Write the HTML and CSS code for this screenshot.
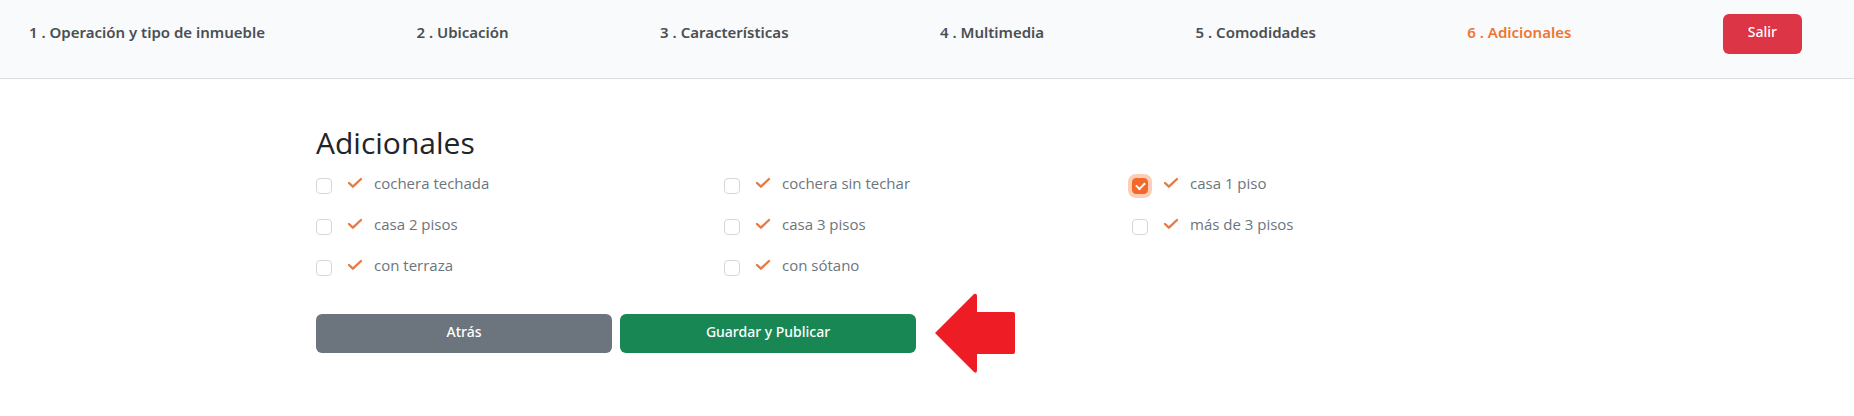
FILE: index.html
```html
<!DOCTYPE html>
<html lang="es">
<head>
<meta charset="utf-8">
<meta name="viewport" content="width=device-width, initial-scale=1">
<title>Adicionales</title>
<link rel="stylesheet" href="styles.css">
</head>
<body>
<svg class="sprite" aria-hidden="true">
  <symbol id="check" viewBox="0 0 16 12"><path d="M2 6 5.9 9.7 14 2" fill="none" stroke="currentColor" stroke-width="2.4" stroke-linecap="round" stroke-linejoin="round"/></symbol>
</svg>
<header class="topbar">
  <a class="step" href="#">1 . Operación y tipo de inmueble</a>
  <a class="step" href="#">2 . Ubicación</a>
  <a class="step" href="#">3 . Características</a>
  <a class="step" href="#">4 . Multimedia</a>
  <a class="step" href="#">5 . Comodidades</a>
  <a class="step step-active" href="#" aria-current="step">6 . Adicionales</a>
  <button class="btn btn-exit" type="button">Salir</button>
</header>
<main class="container">
  <h1 class="title">Adicionales</h1>
  <form>
    <div class="options">
      <label class="option"><input class="box" type="checkbox"><svg class="tick"><use href="#check"/></svg><span>cochera techada</span></label>
      <label class="option"><input class="box" type="checkbox"><svg class="tick"><use href="#check"/></svg><span>cochera sin techar</span></label>
      <label class="option"><input class="box" type="checkbox" checked><svg class="tick"><use href="#check"/></svg><span>casa 1 piso</span></label>
      <label class="option"><input class="box" type="checkbox"><svg class="tick"><use href="#check"/></svg><span>casa 2 pisos</span></label>
      <label class="option"><input class="box" type="checkbox"><svg class="tick"><use href="#check"/></svg><span>casa 3 pisos</span></label>
      <label class="option"><input class="box" type="checkbox"><svg class="tick"><use href="#check"/></svg><span>más de 3 pisos</span></label>
      <label class="option"><input class="box" type="checkbox"><svg class="tick"><use href="#check"/></svg><span>con terraza</span></label>
      <label class="option"><input class="box" type="checkbox"><svg class="tick"><use href="#check"/></svg><span>con sótano</span></label>
    </div>
    <div class="actions">
      <button class="btn btn-back" type="button">Atrás</button>
      <button class="btn btn-save" type="button">Guardar y Publicar</button>
      <svg class="arrow" viewBox="0 0 80 80" aria-hidden="true"><path d="M0 40 39 1Q42 0 42 3V19H78Q80 19 80 21V59Q80 61 78 61H42V77Q42 81 39 79Z" fill="#ee1c25"/></svg>
    </div>
  </form>
</main>
</body>
</html>
```
FILE: styles.css
```css
* { box-sizing: border-box; }

body {
  margin: 0;
  background: #fff;
  color: #212529;
  font-family: "Open Sans", "Noto Sans", sans-serif;
  font-size: 15px;
  line-height: 24px;
}

.sprite { display: none; }

.topbar {
  display: flex;
  justify-content: space-between;
  align-items: flex-start;
  padding: 14px 52px 24px 29px;
  background: #f8fafc;
  border-bottom: 1px solid #d9dee2;
  font-family: "Noto Sans", "Open Sans", sans-serif;
}

.step {
  padding-top: 6px;
  color: #4a4f52;
  font-weight: 600;
  text-decoration: none;
}

.step-active { color: #f0752f; }

.btn {
  height: 39px;
  padding: 0 25px 2px;
  border: 0;
  border-radius: 6px;
  color: #fff;
  font-family: "Noto Sans", "Open Sans", sans-serif;
  font-size: 14px;
  font-weight: 500;
  line-height: 24px;
}

.btn-exit {
  height: 40px;
  padding-bottom: 4px;
  background: #dc3545;
}

.container {
  max-width: 1224px;
  margin: 0 auto;
  padding-top: 44px;
}

.title {
  margin: 0;
  padding-left: 1px;
  font-size: 30px;
  font-weight: 400;
  line-height: 40px;
}

.options {
  display: grid;
  grid-template-columns: repeat(3, 1fr);
  row-gap: 17px;
  padding-top: 8px;
}

.option {
  display: flex;
  align-items: flex-start;
  color: #6c757d;
}

.option span { margin-left: 11px; }

.box {
  appearance: none;
  width: 16px;
  height: 16px;
  margin: 7px 15px 0 1px;
  border: 1px solid #d5d8db;
  border-radius: 4px;
  background: #fff;
}

.box:checked {
  display: grid;
  place-items: center;
  border-color: #f4692a;
  background: #f4692a;
  box-shadow: 0 0 0 4px #fbcfb7;
}

.box:checked::after {
  content: "";
  width: 7px;
  height: 4px;
  margin-bottom: 2px;
  border: solid #fff;
  border-width: 0 0 2px 2px;
  transform: rotate(-45deg);
}

.tick {
  width: 16px;
  height: 12px;
  margin-top: 6px;
  color: #e57b46;
}

.actions {
  display: flex;
  align-items: center;
  gap: 8px;
  padding: 16px 0 0 1px;
}

.btn-back, .btn-save { flex: 0 1 296px; }
.btn-back { background: #6c757d; }
.btn-save { background: #198754; }

.arrow {
  width: 80px;
  height: 80px;
  margin-left: 11px;
}
```
